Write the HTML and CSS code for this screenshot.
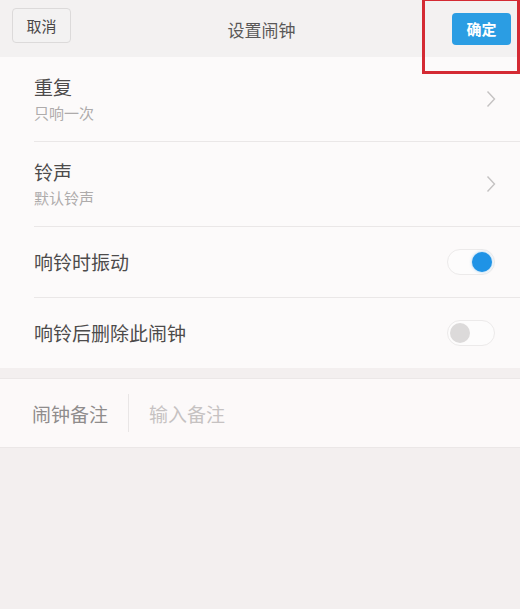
FILE: index.html
```html
<!DOCTYPE html>
<html lang="zh-CN">
<head>
    <meta charset="UTF-8">
    <meta name="viewport" content="width=device-width, initial-scale=1.0">
    <title>设置闹钟</title>
    <link rel="stylesheet" href="styles.css">
</head>
<body>
    <!-- 顶部栏 -->
    <header class="topbar">
        <button class="btn-cancel">取消</button>
        <h1 class="topbar-title">设置闹钟</h1>
        <button class="btn-ok">确定</button>
        <div class="mark"></div>
    </header>

    <div class="list">
        <div class="row row-link">
            <div class="row-text">
                <div class="row-title">重复</div>
                <div class="row-sub">只响一次</div>
            </div>
            <svg class="chevron" width="10" height="18" viewBox="0 0 10 18"><path d="M1.5 1.5 L8.5 9 L1.5 16.5" fill="none" stroke="#c4c2c2" stroke-width="1.4"/></svg>
        </div>
        <div class="row row-link">
            <div class="row-text">
                <div class="row-title">铃声</div>
                <div class="row-sub">默认铃声</div>
            </div>
            <svg class="chevron" width="10" height="18" viewBox="0 0 10 18"><path d="M1.5 1.5 L8.5 9 L1.5 16.5" fill="none" stroke="#c4c2c2" stroke-width="1.4"/></svg>
        </div>
        <div class="row row-switch">
            <div class="row-title">响铃时振动</div>
            <span class="switch on"><span class="knob"></span></span>
        </div>
        <div class="row row-switch last">
            <div class="row-title">响铃后删除此闹钟</div>
            <span class="switch"><span class="knob"></span></span>
        </div>
    </div>

    <div class="note">
        <span class="note-label">闹钟备注</span>
        <span class="note-sep"></span>
        <span class="note-input">输入备注</span>
    </div>
</body>
</html>
```

FILE: styles.css
```css
/* 基础样式 */
body {
    font-family: "Noto Sans CJK SC", "Noto Sans", sans-serif;
    margin: 0;
    padding: 0;
    background-color: #f3efef;
    color: #4d4b4b;
}

.topbar {
    position: relative;
    height: 57px;
    display: flex;
    align-items: center;
    padding: 0 9px 0 12px;
    background-color: #f3f1f1;
}

.btn-cancel {
    width: 59px;
    height: 35px;
    margin-top: -7px;
    font-family: inherit;
    font-size: 15px;
    color: #4a4848;
    background-color: #f3f2f2;
    border: 1px solid #dcdada;
    border-radius: 4px;
    padding: 0;
}

.topbar-title {
    flex: 1;
    margin: 0 0 -1px 0;
    text-align: center;
    font-size: 17px;
    font-weight: normal;
    color: #5a5858;
}

.btn-ok {
    width: 59px;
    height: 32px;
    font-family: inherit;
    font-size: 15px;
    font-weight: bold;
    color: #fff;
    background-color: #2b9de3;
    border: none;
    border-radius: 4px;
    padding: 0;
}

/* 红色标注框 */
.mark {
    position: absolute;
    left: 422px;
    top: -2px;
    width: 92px;
    height: 70px;
    border: 3px solid #d42a33;
    z-index: 2;
}

.list {
    background-color: #fcfafa;
}

.row {
    display: flex;
    align-items: center;
    margin-left: 34px;
    padding-right: 24px;
    border-bottom: 1px solid #eae7e7;
}

.row.last {
    border-bottom: none;
}

.row-link {
    height: 84px;
    padding-right: 24px;
}

.row-switch {
    height: 70px;
}

.row-text {
    flex: 1;
    margin-top: 2px;
}

.row-switch .row-title {
    flex: 1;
}

.row-title {
    font-size: 19px;
    color: #4d4b4b;
    line-height: 26px;
}

.row-sub {
    font-size: 15px;
    color: #aeabab;
    line-height: 26px;
}

.switch {
    width: 48px;
    height: 26px;
    border: 1px solid #eceaea;
    border-radius: 14px;
    background-color: #fdfcfc;
    display: flex;
    align-items: center;
    padding: 0 2px;
    box-sizing: border-box;
    margin-right: 1px;
}

.knob {
    width: 20px;
    height: 20px;
    border-radius: 50%;
    background-color: #dcdada;
}

.switch.on {
    justify-content: flex-end;
}

.switch.on .knob {
    background-color: #1f93e6;
    box-shadow: 0 0 3px rgba(31, 147, 230, 0.5);
}

.note {
    margin-top: 10px;
    height: 68px;
    display: flex;
    align-items: center;
    padding-left: 32px;
    background-color: #fcf9f9;
    border-top: 1px solid #ebe7e7;
    border-bottom: 1px solid #ebe7e7;
}

.note-label {
    font-size: 19px;
    color: #8f8c8c;
}

.note-sep {
    width: 1px;
    height: 38px;
    margin: 0 20px;
    background-color: #e9e6e6;
}

.note-input {
    font-size: 19px;
    color: #c6c2c2;
}
```
